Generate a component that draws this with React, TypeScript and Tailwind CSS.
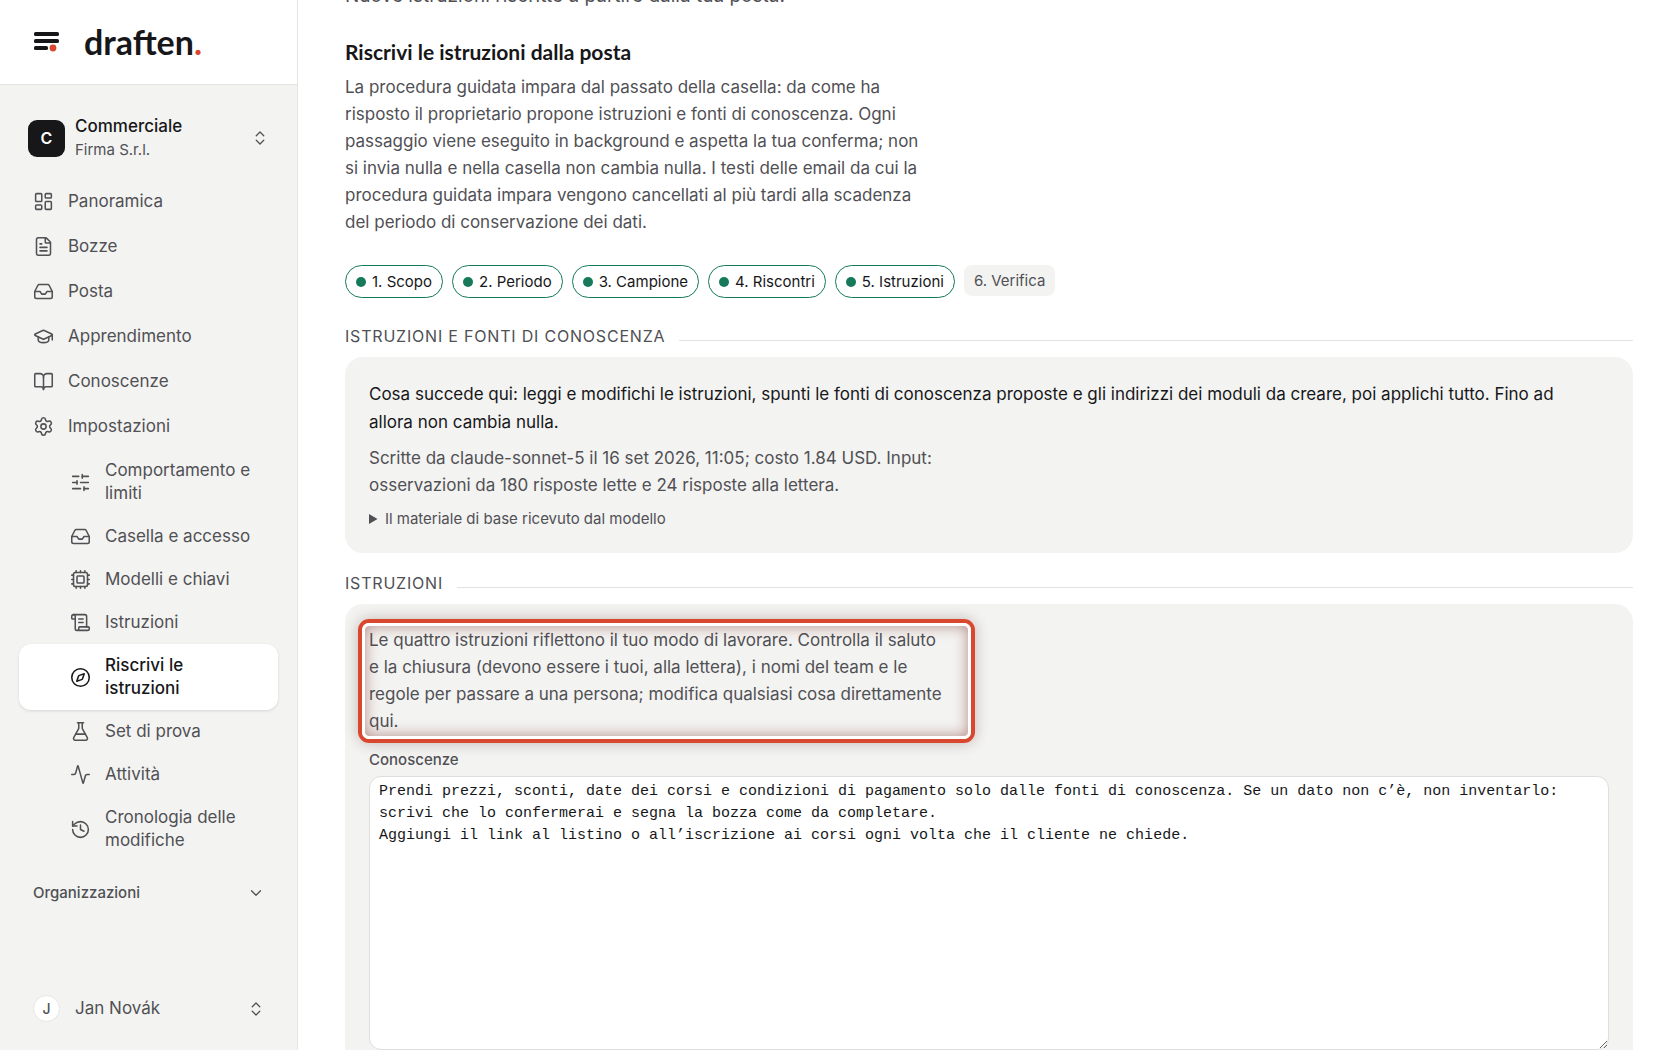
import React from 'react';
import {
  Activity, BookOpen, ChevronDown, ChevronsUpDown, Compass, Cpu, FileText, FlaskConical,
  GraduationCap, History, Inbox, LayoutDashboard, ScrollText, Settings, SlidersHorizontal,
  type LucideIcon,
} from 'lucide-react';

type Item = { label: string; icon: LucideIcon; active?: boolean };

const mainNav: Item[] = [
  { label: 'Panoramica', icon: LayoutDashboard },
  { label: 'Bozze', icon: FileText },
  { label: 'Posta', icon: Inbox },
  { label: 'Apprendimento', icon: GraduationCap },
  { label: 'Conoscenze', icon: BookOpen },
  { label: 'Impostazioni', icon: Settings },
];

const subNav: Item[] = [
  { label: 'Comportamento e limiti', icon: SlidersHorizontal },
  { label: 'Casella e accesso', icon: Inbox },
  { label: 'Modelli e chiavi', icon: Cpu },
  { label: 'Istruzioni', icon: ScrollText },
  { label: 'Riscrivi le istruzioni', icon: Compass, active: true },
  { label: 'Set di prova', icon: FlaskConical },
  { label: 'Attività', icon: Activity },
  { label: 'Cronologia delle modifiche', icon: History },
];

const steps = ['1. Scopo', '2. Periodo', '3. Campione', '4. Riscontri', '5. Istruzioni'];

const knowledge = `Prendi prezzi, sconti, date dei corsi e condizioni di pagamento solo dalle fonti di conoscenza. Se un dato non c’è, non inventarlo: scrivi che lo confermerai e segna la bozza come da completare.
Aggiungi il link al listino o all’iscrizione ai corsi ogni volta che il cliente ne chiede.`;

function Logo() {
  return (
    <a href="#" className="flex items-center gap-6" aria-label="draften">
      <svg width="26" height="20" viewBox="0 0 26 20" aria-hidden="true">
        <rect x="0" y="0" width="25" height="4" rx="1.6" fill="#17171a" />
        <rect x="0" y="7" width="25" height="4" rx="1.6" fill="#17171a" />
        <rect x="0" y="14" width="14" height="4" rx="1.6" fill="#17171a" />
        <circle cx="19" cy="16" r="3.4" fill="#d9472f" />
      </svg>
      <span className="font-[Lato,sans-serif] text-[34px] leading-10 font-bold text-[#17171a]">
        draften<span className="text-[#d9472f]">.</span>
      </span>
    </a>
  );
}

function Sidebar() {
  return (
    <aside className="flex w-[298px] shrink-0 flex-col border-r border-[#e5e5e3] bg-[#f3f3f1]">
      <div className="flex h-[85px] shrink-0 items-center border-b border-[#e2e2e0] bg-white pl-[34px]">
        <Logo />
      </div>
      <button type="button" className="mt-[29px] flex items-center pr-7 pl-7 text-left">
        <span className="flex size-[37px] items-center justify-center rounded-[9px] bg-[#17171a] text-base font-semibold text-white">C</span>
        <span className="ml-[10px] flex-1">
          <span className="block text-[17px] leading-6 font-medium text-[#17171a]">Commerciale</span>
          <span className="block text-[15px] leading-6">Firma S.r.l.</span>
        </span>
        <ChevronsUpDown size={18} strokeWidth={1.75} />
      </button>
      <nav aria-label="Principale" className="mt-[17px] px-[19px]">
        {mainNav.map(({ label, icon: Icon }) => (
          <a key={label} href="#" className="flex items-center gap-[14px] py-[11px] pl-[14px] text-[17px] leading-[23px]">
            <Icon size={21} strokeWidth={1.75} className="shrink-0" />
            {label}
          </a>
        ))}
        {subNav.map(({ label, icon: Icon, active }) => (
          <a
            key={label}
            href="#"
            aria-current={active ? 'page' : undefined}
            className={
              active
                ? 'flex items-center gap-[14px] rounded-xl bg-white py-[10px] pr-5 pl-[51px] text-[17px] leading-[23px] font-medium text-[#17171a] shadow-[0_1px_3px_rgba(0,0,0,0.12)]'
                : 'flex items-center gap-[14px] py-[10px] pr-5 pl-[51px] text-[17px] leading-[23px]'
            }
          >
            <Icon size={21} strokeWidth={1.75} className="shrink-0" />
            <span>{label}</span>
          </a>
        ))}
      </nav>
      <button type="button" className="mt-[19px] flex items-center justify-between pr-8 pl-[33px] text-[15px] leading-6 font-medium">
        Organizzazioni
        <ChevronDown size={18} strokeWidth={1.75} />
      </button>
      <button type="button" className="mt-auto mb-7 flex items-center pr-8 pl-[33px] text-[17px]">
        <span className="flex size-[27px] items-center justify-center rounded-full border border-[#e5e5e3] bg-white text-sm font-medium">J</span>
        <span className="ml-[15px] flex-1 text-left">Jan Novák</span>
        <ChevronsUpDown size={18} strokeWidth={1.75} />
      </button>
    </aside>
  );
}

function SectionTitle({ children }: { children: React.ReactNode }) {
  return (
    <h3 className="flex items-center gap-[14px] text-base leading-6 tracking-wider uppercase">
      {children}
      <span className="mt-2 h-px flex-1 bg-[#e2e2e0]" />
    </h3>
  );
}

export default function App() {
  return (
    <div className="flex h-screen overflow-hidden bg-white font-[Inter,sans-serif] text-[#505055]">
      <Sidebar />
      <main className="min-w-0 flex-1 overflow-hidden pr-[47px] pl-[47px]">
        <p className="-mt-[18px] text-[19px] leading-[27px]">Nuove istruzioni riscritte a partire dalla tua posta.</p>
        <h2 className="mt-[29px] font-[Lato,sans-serif] text-[21px] leading-7 font-bold text-[#17171a]">Riscrivi le istruzioni dalla posta</h2>
        <p className="mt-2 max-w-[578px] text-[17px] leading-[27px]">
          La procedura guidata impara dal passato della casella: da come ha risposto il proprietario propone istruzioni e fonti di conoscenza. Ogni passaggio viene eseguito in background e aspetta la tua conferma; non si invia nulla e nella casella non cambia nulla. I testi delle email da cui la procedura guidata impara vengono cancellati al più tardi alla scadenza del periodo di conservazione dei dati.
        </p>
        <ol className="mt-[29px] flex flex-wrap items-start gap-[9px] text-[15px] leading-[31px]">
          {steps.map((s) => (
            <li key={s} className="flex items-center gap-[6px] rounded-full border border-[#15795a] px-[10px] text-[#17171a]">
              <span className="size-[10px] rounded-full bg-[#15795a]" />
              {s}
            </li>
          ))}
          <li className="rounded-lg bg-[#f3f3f1] px-[10px]">6. Verifica</li>
        </ol>

        <div className="mt-[26px]">
          <SectionTitle>Istruzioni e fonti di conoscenza</SectionTitle>
        </div>
        <section className="mt-[9px] rounded-[18px] bg-[#f3f3f1] px-6 pt-[23px] pb-[22px]">
          <p className="pr-4 text-[17px] leading-7 text-[#17171a]">
            Cosa succede qui: leggi e modifichi le istruzioni, spunti le fonti di conoscenza proposte e gli indirizzi dei moduli da creare, poi applichi tutto. Fino ad allora non cambia nulla.
          </p>
          <p className="mt-[9px] max-w-[578px] text-[17px] leading-[27px]">
            Scritte da claude-sonnet-5 il 16 set 2026, 11:05; costo 1.84 USD. Input: osservazioni da 180 risposte lette e 24 risposte alla lettera.
          </p>
          <details className="mt-2 text-[15px] leading-6">
            <summary>Il materiale di base ricevuto dal modello</summary>
          </details>
        </section>

        <div className="mt-[18px]">
          <SectionTitle>Istruzioni</SectionTitle>
        </div>
        <section className="mt-[9px] rounded-t-[18px] bg-[#f3f3f1] px-6 pt-[23px] pb-6">
          <div className="relative max-w-[595px]">
            <p className="max-w-[578px] text-[17px] leading-[27px]">
              Le quattro istruzioni riflettono il tuo modo di lavorare. Controlla il saluto e la chiusura (devono essere i tuoi, alla lettera), i nomi del team e le regole per passare a una persona; modifica qualsiasi cosa direttamente qui.
            </p>
            <div className="pointer-events-none absolute -inset-x-[11px] -inset-y-2 rounded-[11px] border-4 border-[#d9472f] shadow-[0_0_14px_rgba(80,50,40,0.3)]">
              <div className="size-full rounded-[7px] border-[3px] border-white shadow-[inset_0_0_14px_rgba(120,40,30,0.5)]" />
            </div>
          </div>
          <label htmlFor="knowledge" className="mt-[13px] block text-[15px] leading-6 font-medium">Conoscenze</label>
          <textarea
            id="knowledge"
            rows={12}
            defaultValue={knowledge}
            className="mt-1 block w-full resize rounded-xl border border-[#dededc] bg-white px-[9px] py-1 font-['Liberation_Mono',monospace] text-[15px] leading-[22px] text-[#17171a]"
          />
        </section>
      </main>
    </div>
  );
}
